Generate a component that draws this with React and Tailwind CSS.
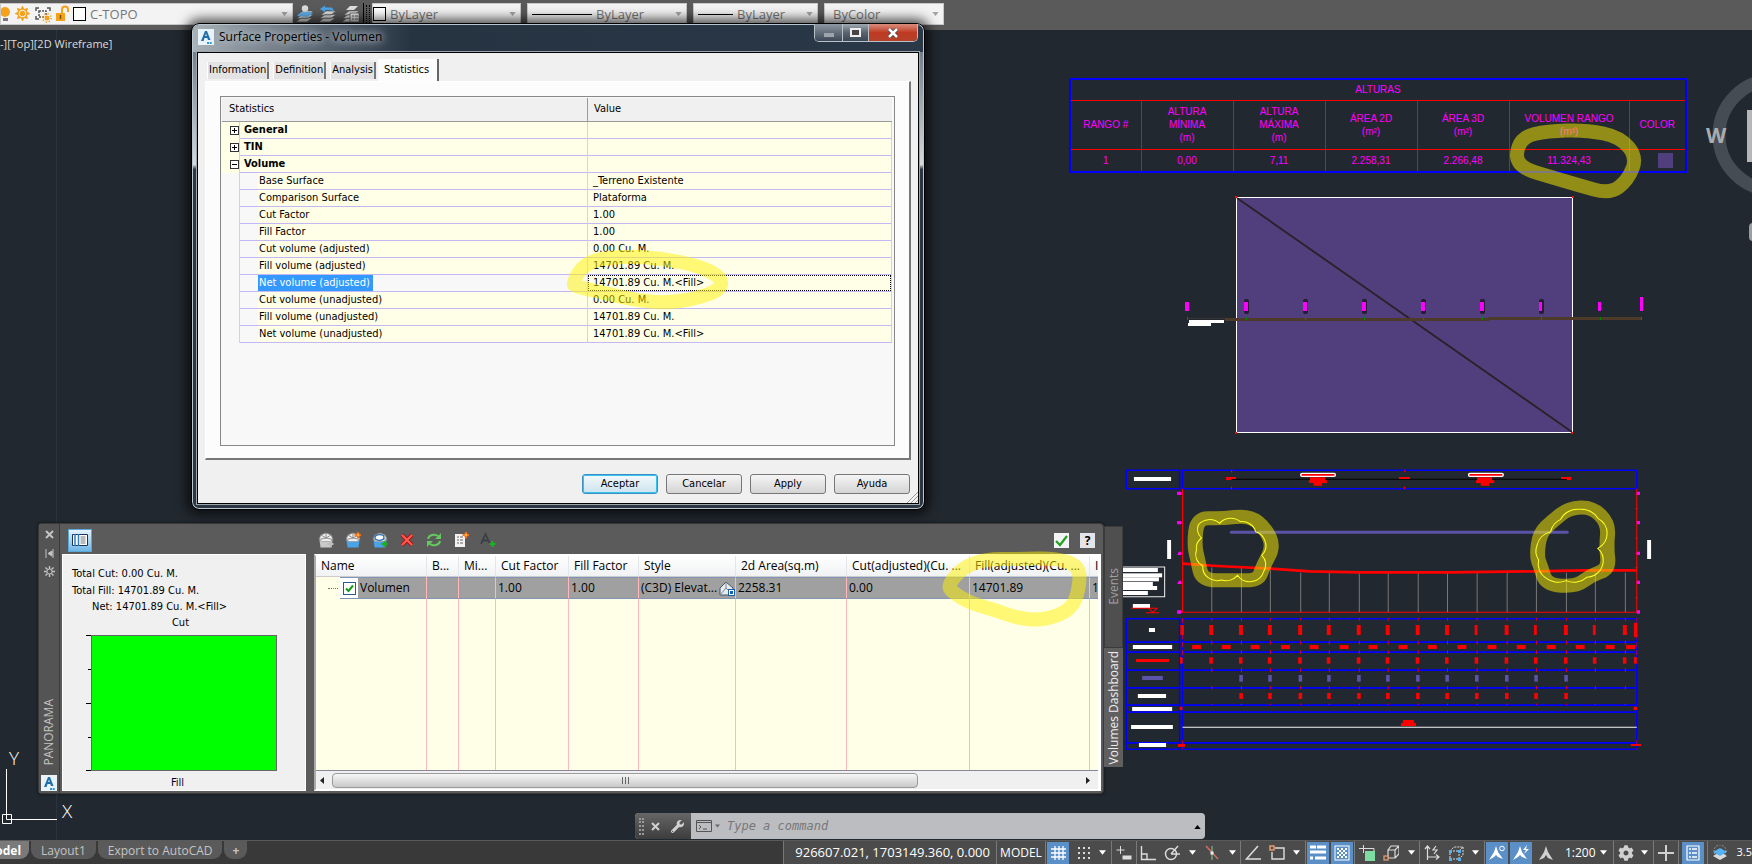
import { FaCog, FaWrench, FaSun } from "react-icons/fa";

const statRows = [
  { label: "General", group: true, open: false },
  { label: "TIN", group: true, open: false },
  { label: "Volume", group: true, open: true },
  { label: "Base Surface", value: "_Terreno Existente" },
  { label: "Comparison Surface", value: "Plataforma" },
  { label: "Cut Factor", value: "1.00" },
  { label: "Fill Factor", value: "1.00" },
  { label: "Cut volume (adjusted)", value: "0.00 Cu. M." },
  { label: "Fill volume (adjusted)", value: "14701.89 Cu. M." },
  { label: "Net volume (adjusted)", value: "14701.89 Cu. M.<Fill>", selected: true },
  { label: "Cut volume (unadjusted)", value: "0.00 Cu. M." },
  { label: "Fill volume (unadjusted)", value: "14701.89 Cu. M." },
  { label: "Net volume (unadjusted)", value: "14701.89 Cu. M.<Fill>" },
];

const stations = [285, 368, 449, 534, 614, 698, 779, 863, 945, 1028, 1112, 1194, 1278, 1359, 1443];

// closed curve that runs through the middle of each pair of points
function smooth(points) {
  const mid = (a, b) => [(a[0] + b[0]) / 2, (a[1] + b[1]) / 2];
  const start = mid(points[points.length - 1], points[0]);
  const parts = points.map((p, i) => {
    const m = mid(p, points[(i + 1) % points.length]);
    return `Q${p[0]} ${p[1]} ${m[0]} ${m[1]}`;
  });
  return `M${start[0]} ${start[1]}${parts.join("")}Z`;
}

function cloud(points, r) {
  const rest = points.slice(1).concat([points[0]]);
  return `M${points[0].join(" ")}` + rest.map((p) => `A${r} ${r} 0 0 1 ${p.join(" ")}`).join("");
}

function Arrow({ className }) {
  return (
    <svg viewBox="0 0 8 5" className={className}>
      <path d="M0 0h8L4 5z" fill="currentColor" />
    </svg>
  );
}

function AppLogo({ className }) {
  return (
    <svg viewBox="0 0 16 16" className={className}>
      <rect width="16" height="16" fill="#e9f3fa" />
      <path d="M3 12 7 2h2l3.500 9h-2.500l-.7-2H6.500l-.9 3zM7.200 7h1.600L8 4.500z" fill="#1f6fa8" fillRule="evenodd" />
      <path d="M9 14h5" stroke="#2f9bd6" strokeWidth="2" strokeDasharray="2 .7" />
    </svg>
  );
}

/* ---------- top toolbar ---------- */

function Combo({ label, value, className, children }) {
  return (
    <div className={`flex h-[22px] items-center border border-[#c8c8c8] bg-[#f3f3f3] ${className}`}>
      {children}
      <select aria-label={label} className="min-w-0 flex-1 appearance-none bg-transparent text-[13px] leading-5 text-[#777] outline-none">
        <option>{value}</option>
      </select>
      <Arrow className="mr-1 h-1 w-[7px] text-[#a5a5a5]" />
    </div>
  );
}

function Swatch() {
  return <span className="mr-1 h-[14px] w-[13px] shrink-0 border border-black bg-white" />;
}

function LayerIcon({ kind }) {
  return (
    <svg viewBox="0 0 18 18" className="h-[18px] w-[18px]">
      <path d="m0 17 5-4h11l-5 4zM1 13.500l5-4h11l-5 4zM2 10l5-4h10l-5 4z" fill="#dedede" stroke="#5b5b5b" strokeWidth=".6" />
      {kind === "current" && (
        <g>
          <path d="M1 11c3-5 11-5 16-3l-5 4z" fill="#62b1ec" />
          <circle cx="9" cy="3.500" r="3.200" fill="#dcdcdc" />
        </g>
      )}
      {kind === "previous" && <path d="M1 4 6 .5v2h5c3 0 4 2 3.500 5C13 5 11 5 6 5v2.500z" fill="#4aa3e6" />}
      {kind === "states" && (
        <g>
          <path d="m4 5 4-4h8l-4 4z" fill="#dedede" />
          <rect x="8" y="8" width="9" height="9" fill="#e4e4e4" stroke="#4d4d4d" strokeWidth=".7" />
          <path d="M10 11h2m1 0h3m-6 3h2m1 0h3" stroke="#555" />
        </g>
      )}
    </svg>
  );
}

function Toolbar() {
  return (
    <header className="flex h-[30px] shrink-0 items-start bg-[#5a5a5a] pt-[3px]">
      <Combo label="Layer" value="C-TOPO" className="w-[293px]">
        <svg viewBox="0 0 72 18" className="h-[18px] w-[72px] shrink-0">
          <circle cx="4" cy="7" r="5" fill="#f5a21b" />
          <rect x="2" y="13" width="5" height="3" fill="#777" />
          <g fill="none" stroke="#555" strokeWidth="1.500">
            <path d="M35 6V3h3m8 0h3v3M35 11v3h3" />
            <path d="M38 6h7v6h-7z" strokeDasharray="2 1" />
          </g>
          <circle cx="46" cy="13" r="2.500" fill="#f5a21b" />
          <circle cx="46" cy="13" r="4.200" fill="none" stroke="#f5a21b" strokeWidth="1.500" strokeDasharray="1.300 2" />
          <path d="M55 8h9v8h-9z" fill="#f5a21b" />
          <path d="M61 8V4.500a3 3 0 0 1 6 0V7" fill="none" stroke="#f5a21b" strokeWidth="2" />
          <path d="M59.500 10v4" stroke="#7a4d00" strokeWidth="1.500" />
          <g>
            <FaSun x="14" y="1" width="15" height="15" size={15} color="#f5a21b" />
          </g>
        </svg>
        <Swatch />
      </Combo>
      <div className="mx-[3px] flex h-[22px] items-center gap-[5px]">
        <LayerIcon kind="current" />
        <LayerIcon kind="previous" />
        <LayerIcon kind="states" />
      </div>
      <div className="flex h-[22px] items-center border-l border-black">
        <span className="mx-[2px] h-[18px] w-1 border-x border-dotted border-black" />
      </div>
      <div className="flex gap-[6px]">
        <Combo label="Object color" value="ByLayer" className="w-[149px]">
          <Swatch />
        </Combo>
        <Combo label="Linetype" value="ByLayer" className="w-[160px]">
          <span className="ml-1 mr-1 h-px w-[60px] bg-black" />
        </Combo>
        <Combo label="Lineweight" value="ByLayer" className="w-[125px]">
          <span className="ml-1 mr-1 h-px w-[35px] bg-black" />
        </Combo>
        <Combo label="Plot style" value="ByColor" className="w-[120px] pl-2" />
      </div>
    </header>
  );
}

/* ---------- drawing area ---------- */

function HeightsTable() {
  const head = "border border-[#f00] font-normal leading-[13px]";
  return (
    <table className="absolute left-[1069px] top-[48px] w-[618px] table-fixed border-collapse border-2 border-[#00f] text-center font-['Liberation_Sans',sans-serif] text-[10px] text-[#f0f]">
      <colgroup>
        <col className="w-[71px]" />
        <col className="w-[92px]" />
        <col className="w-[92px]" />
        <col className="w-[92px]" />
        <col className="w-[92px]" />
        <col className="w-[120px]" />
        <col />
      </colgroup>
      <thead>
        <tr className="h-[21px]">
          <th colSpan={7} className="border-b border-[#f00] font-normal">ALTURAS</th>
        </tr>
        <tr className="h-[49px]">
          <th className={head}>RANGO #</th>
          <th className={head}>ALTURA<br />MÍNIMA<br />(m)</th>
          <th className={head}>ALTURA<br />MÁXIMA<br />(m)</th>
          <th className={head}>ÁREA 2D<br />(m²)</th>
          <th className={head}>ÁREA 3D<br />(m²)</th>
          <th className={head}>VOLUMEN RANGO<br />(m³)</th>
          <th className={head}>COLOR</th>
        </tr>
      </thead>
      <tbody>
        <tr className="h-[23px]">
          {["1", "0,00", "7,11", "2.258,31", "2.266,48", "11.324,43"].map((v) => (
            <td key={v} className="border-x border-[#f00]">{v}</td>
          ))}
          <td>
            <span className="ml-7 block h-[15px] w-[15px] bg-[#503e7d]" />
          </td>
        </tr>
      </tbody>
    </table>
  );
}

function PlanView() {
  const labels = [1187, 1246, 1305, 1364, 1423, 1482, 1541, 1600];
  return (
    <svg viewBox="1180 190 470 250" className="absolute left-[1180px] top-[160px] h-[250px] w-[470px]">
      <rect x="1236.500" y="197.500" width="336" height="235" fill="#503e7d" stroke="#fff" />
      <path d="M1237 198 1572 432" stroke="#2a2128" strokeWidth="1.800" />
      <path d="M1235 196h2v2h-2zM1572 196h2v2h-2zM1235 432h2v2h-2zM1571 432h2v2h-2z" fill="#f00" />
      <path d="M1187 318.500h38" stroke="#3a3330" />
      <path d="M1225 319.500H1488L1490 318.500H1642" fill="none" stroke="#4d3a28" strokeWidth="3" />
      {labels.map((x, i) => (
        <g key={x}>
          {i > 0 && i < 7 && <rect x={x - 2} y="299" width="5" height="15" rx="2" fill="#241c33" />}
          <rect x={x - 2} y="302" width={i > 5 ? 3 : 4} height="9" fill="#f0f" />
          <path d={`M${x + 0.5} 317v3`} stroke="#080" />
        </g>
      ))}
      <rect x="1640" y="297" width="3" height="14" fill="#f0f" />
      <path d="M1641.500 317v3" stroke="#080" />
      <path d="M1189 320h35v3h-13v3h-23v-3h1z" fill="#fff" />
    </svg>
  );
}

function ProfileView() {
  const vs = { vectorEffect: "non-scaling-stroke" };
  const rows = [506, 577, 607, 661, 713, 766, 787, 878, 898];
  const captions = [
    [67, 81, 104, "#fff"], [109, 534, 17, "#fff"], [64, 585, 110, "#fff"], [73, 627, 92, "#f00", 9], [90, 678, 58, "#5a53a8"],
    [78, 732, 79, "#fff"], [62, 771, 112, "#fff"], [59, 825, 117, "#fff"], [81, 879, 76, "#fff"],
  ];
  const legend = [[354, 98], [370, 110], [382, 101], [396, 84], [408, 96], [423, 70]];
  const cloudA = [[247, 225], [307, 220], [365, 215], [408, 245], [433, 270], [425, 316], [430, 365], [357, 376], [312, 390], [260, 348], [242, 300], [256, 264]];
  const cloudB = [[1234, 245], [1262, 208], [1315, 178], [1366, 205], [1366, 295], [1358, 375], [1335, 382], [1277, 392], [1222, 385], [1200, 330], [1196, 285]];
  const bandA = [[236, 285], [244, 203], [310, 206], [390, 196], [435, 235], [458, 290], [428, 350], [415, 392], [340, 390], [258, 392], [246, 330]];
  const bandB = [[1195, 320], [1203, 250], [1240, 212], [1285, 174], [1350, 171], [1396, 220], [1390, 290], [1397, 357], [1345, 377], [1305, 410], [1222, 404], [1206, 350]];
  return (
    <svg viewBox="0 0 1568 930" preserveAspectRatio="none" className="absolute left-[1110px] top-[420px] h-[310px] w-[560px]">
      <g fill="none" stroke="#00f" strokeWidth="1.500">
        <path d="M46 61H195V116H46zM203 61H1475V116H203z" style={vs} />
        {rows.slice(1).map((y, i) => (
          <path key={y} d={`M46 ${rows[i]}H195V${y}H46zM203 ${rows[i]}H1475V${y}H203z`} style={vs} />
        ))}
      </g>
      {captions.map(([x, y, w, fill, h = 12]) => (
        <rect key={y} x={x} y={y} width={w} height={h} fill={fill} />
      ))}
      <path d="M340 88H1280" stroke="#000" strokeWidth="3" />
      <g fill="#f00">
        <path d="M325 81h28v6h-14v3h-14zM809 81h31v6h-31zM1263 81h28v9h-12v-3h-16zM339 60h3v7h-3zM339 110h3v7h-3zM824 60h3v7h-3zM823 110h3v7h-3z" />
        <path d="M560 82h42v9h6v8h-14v8h-24v-8h-13v-8h3zM1028 82h42v9h6v8h-14v8h-24v-8h-13v-8h3z" />
      </g>
      <rect x="534" y="70" width="97" height="9" rx="4" fill="#f00" stroke="#fff" strokeWidth="4" />
      <rect x="1004" y="70" width="97" height="9" rx="4" fill="#f00" stroke="#fff" strokeWidth="4" />
      <path d="M203 116V487M1475 116V487M190 487H1475" stroke="#f00" strokeWidth="3" fill="none" />
      <path d="M1470 132h9M1470 176h9M1470 265h9M1470 310h9M1470 353h9M1470 443h9M200 132h7M200 220h7M200 310h7M200 398h7" stroke="#f00" strokeWidth="2" />
      {[130, 218, 310, 397, 486].map((y, i) => (
        <path key={y} d={`M${i === 2 || i === 3 ? 193 : 188} ${y - 5}H199V${y + 5}H188zM1475 ${y - 5}h9v10h-9z`} fill="#f0f" />
      ))}
      <path d="M160 270h11v57h-11zM1504 270h11v57h-11z" fill="#fff" />

      {/* legend box, partly under the side tabs */}
      <path d="M0 351H153V440H0" fill="none" stroke="#e8e8e8" strokeWidth="3" />
      {legend.map(([y, w]) => (
        <rect key={y} x="36" y={y} width={w} height="12" fill="#fff" />
      ))}
      <path d="M64 462h48v12h-48z" fill="#fff" />
      <path d="M59 475H132L120 487 108 475M101 488h36" fill="none" stroke="#f00" strokeWidth="3" />

      {stations.map((x) => (
        <path key={x} d={`M${x} ${x < 500 ? 352 : 368}V486`} stroke="#858585" strokeWidth="2.500" />
      ))}
      <path d="M340 247H1280" stroke="#5a53a8" strokeWidth="9" strokeLinecap="round" />
      <path d="M203 341 300 348 450 356 560 364 700 367H950L1190 364 1330 361H1475" fill="none" stroke="#f00" strokeWidth="8" />

      {stations.map((x, i) => (
        <g key={x}>
          <path d={`M${x} 504V512M${x} 572V584M${x} 601V612M${x} 654V666M${x} 708V718M${x} 761V765`} stroke="#f00" strokeWidth="2.500" />
          <rect x={x - 7} y="525" width={i % 2 && i > 8 ? 8 : 11} height="30" fill="#f00" />
          <rect x={x - 7} y="622" width="10" height="19" fill="#f00" />
          {i > 0 && i < 13 && <rect x={x - 6} y="675" width="10" height="20" fill="#5a53a8" />}
          {i > 0 && i < 13 && <rect x={x - 6} y="729" width="10" height="18" fill="#f00" />}
          <rect x={x - 55} y="585" width="25" height="12" fill="#f00" />
        </g>
      ))}
      <path d="M1445 585h25v12h-25zM197 525h10v30h-10zM1467 519h10v42h-10zM196 621h6v20h-6zM1467 621h8v20h-8zM195 770h8v10h-8zM1466 770h10v10h-10zM190 882h20v9h-20zM1458 882h29v6h-29z" fill="#f00" />
      <path d="M203 504V640M1475 504V640M203 870V898M1475 870V898" stroke="#f00" strokeWidth="2" strokeDasharray="16 8" />
      <path d="M203 832H1475" stroke="#f4f4f4" strokeWidth="3" />
      <path d="M820 810h31v9h6v9h-42v-9h5z" fill="#f00" />

      <g fill="none">
        <path d={smooth(bandA)} stroke="#fff200" strokeOpacity=".5" strokeWidth="42" />
        <path d={smooth(bandB)} stroke="#fff200" strokeOpacity=".5" strokeWidth="42" />
        <path d={cloud(cloudA, 40)} stroke="#ffff20" strokeWidth="3" />
        <path d={cloud(cloudB, 52)} stroke="#ffff20" strokeWidth="3" />
      </g>
    </svg>
  );
}

function Canvas() {
  return (
    <main className="relative min-h-0 flex-1 overflow-hidden bg-[#22282f]">
      <div className="ml-14 h-full border-l border-[#2b3340]" />
      <p className="absolute left-0 top-[5px] text-[11px] leading-[18px] text-[#dcdcdc]">-][Top][2D Wireframe]</p>
      <HeightsTable />
      <PlanView />
      <ProfileView />
      {/* view cube */}
      <div className="absolute right-0 top-9 h-[180px] w-12 overflow-hidden">
        <svg viewBox="1704 66 48 180" className="h-[180px] w-12">
          <circle cx="1774" cy="135" r="55" fill="none" stroke="#464c54" strokeWidth="13" />
          <text x="1706" y="143" fontSize="21" fontWeight="700" fill="#a9adb1">W</text>
          <rect x="1747" y="110" width="12" height="52" fill="#b4b6b8" />
          <rect x="1749" y="223" width="20" height="18" rx="4" fill="#9a9da1" />
        </svg>
      </div>
      {/* ucs icon */}
      <svg viewBox="0 745 80 85" className="absolute bottom-[10px] left-0 h-[85px] w-20 font-['Open_Sans',sans-serif]">
        <path d="M6.500 769V819.500H57M2.500 814.500h9v9h-9z" fill="none" stroke="#fff" />
        <text x="9" y="765" fontSize="19" fontWeight="300" fill="#fff">Y</text>
        <text x="62" y="818" fontSize="19" fontWeight="300" fill="#fff">X</text>
      </svg>
    </main>
  );
}

/* ---------- surface properties ---------- */

function StatsTable() {
  return (
    <table className="w-full table-fixed border-separate border-spacing-0">
      <colgroup>
        <col className="w-[18px]" />
        <col className="w-[347px]" />
        <col />
      </colgroup>
      <thead>
        <tr className="h-6 bg-[#f0f0f0] text-left">
          <th colSpan={2} className="border-b border-[#999] pl-[7px] font-normal">Statistics</th>
          <th className="border-b border-l border-[#999] pl-[6px] font-normal">Value</th>
        </tr>
      </thead>
      <tbody>
        {statRows.map((row) => (
          <tr key={row.label} className="h-[17px] leading-4">
            <td className={`border-r border-[#ffc0c8] p-0 align-top ${row.group ? "bg-[#ffffe8]" : ""}`}>
              {row.group && (
                <button aria-label={row.label} className="float-right mt-1 flex h-[9px] w-[9px] items-center justify-center border border-[#333] bg-white">
                  <svg viewBox="0 0 5 5" className="h-[5px] w-[5px]">
                    <path d={row.open ? "M0 2.500h5" : "M0 2.500h5M2.500 0v5"} stroke="#000" />
                  </svg>
                </button>
              )}
            </td>
            <td className={`border-b border-[#c4b8f4] p-0 ${row.group ? "bg-[#ffffe8] pl-1 font-bold" : ""}`}>
              {row.group ? (
                row.label
              ) : (
                <div className={`ml-[18px] ${row.selected ? "" : "bg-[#ffffe8]"}`}>
                  <span className={`block h-4 w-fit px-px ${row.selected ? "bg-[#3399ff] pr-[3px] text-white" : ""}`}>{row.label}</span>
                </div>
              )}
            </td>
            <td className="border-b border-l border-r border-b-[#c4b8f4] border-l-[#ffc0c8] border-r-[#ffc0c8] bg-[#ffffe8] p-0">
              <div className={`h-4 border border-dotted pl-1 leading-[14px] ${row.selected ? "border-black" : "border-transparent"}`}>{row.value}</div>
            </td>
          </tr>
        ))}
      </tbody>
    </table>
  );
}

function SurfaceDialog() {
  const tab = "mr-1 h-[17px] border-l border-r-2 border-l-white border-r-[#777] bg-[#e3e3e3] px-px";
  const button = "h-5 w-[76px] rounded-[3px] border bg-linear-to-b from-[#f5f5f5] to-[#d4d4d4]";
  return (
    <section className="absolute left-[191px] top-[23px] flex h-[487px] w-[734px] flex-col rounded-lg border border-black bg-linear-to-b from-[#5c6b78] from-0% via-[#d5dadd] via-29% to-[#2b3642] to-30% p-[5px] pt-0 font-['DejaVu_Sans_Condensed','DejaVu_Sans',sans-serif] text-[11px] text-black shadow-[0_0_12px_4px_rgba(0,0,0,.7),inset_0_0_0_1px_#b9c6cf]">
      <div className="mx-[-4px] mt-px flex h-[27px] shrink-0 items-start rounded-t-[6px] bg-linear-to-r from-[#a9b2b8] via-[#263341] via-30% to-[#2a3847] pl-[5px]">
        <AppLogo className="mt-1 h-4 w-4" />
        <h2 className="ml-[5px] mt-1 font-['Open_Sans',sans-serif] text-xs leading-4 [text-shadow:0_0_6px_#b4bec6,0_0_10px_#b4bec6,0_0_12px_#b4bec6]">Surface Properties - Volumen</h2>
        <div className="-mt-px ml-auto mr-[5px] flex h-[18px] overflow-hidden rounded-b-[5px] border border-t-0 border-[#b8c0c8]">
          <button aria-label="Minimize" className="flex w-[28px] items-center justify-center border-r border-[#b8c0c8] bg-linear-to-b from-[#8e98a3] to-[#3c4857]">
            <span className="mt-1 h-1 w-[10px] bg-[#9ba3ab]" />
          </button>
          <button aria-label="Maximize" className="flex w-[26px] items-center justify-center border-r border-[#b8c0c8] bg-linear-to-b from-[#a0a9b2] via-[#59646f] to-[#3c4857]">
            <span className="h-[9px] w-[11px] border-2 border-[#eee] bg-[#444]" />
          </button>
          <button aria-label="Close" className="flex w-[48px] items-center justify-center bg-linear-to-b from-[#d98c7d] via-[#bf3a22] to-[#b5402a]">
            <svg viewBox="0 0 12 10" className="h-[10px] w-3">
              <path d="m2 1 8 8M10 1 2 9" stroke="#444" strokeWidth="4" />
              <path d="m2 1 8 8M10 1 2 9" stroke="#fff" strokeWidth="2.500" />
            </svg>
          </button>
        </div>
      </div>

      <div className="relative flex min-h-0 flex-1 flex-col border border-black bg-[#f0f0f0] px-[7px] pt-[6px] shadow-[0_0_0_1px_#9aa5ae]">
        <div role="tablist" className="z-10 flex h-[22px] items-end pb-[2px] pl-[2px]">
          <button role="tab" className={tab}>Information</button>
          <button role="tab" className={tab}>Definition</button>
          <button role="tab" className={tab}>Analysis</button>
          <button role="tab" aria-selected="true" className="-mb-[2px] -ml-[2px] h-[22px] border-r-2 border-[#666] bg-[#fcfcfc] pl-[6px] pr-2">Statistics</button>
        </div>
        <div className="mb-[43px] flex min-h-0 flex-1 border-b-2 border-l border-r-2 border-t border-b-[#777] border-l-white border-r-[#777] border-t-white bg-[#fcfcfc] p-[14px] pb-3">
          <div className="flex-1 border border-[#888] bg-[#f8f8f8] p-px pr-[2px]">
            <StatsTable />
          </div>
        </div>
        <div className="absolute bottom-[9px] right-2 flex gap-2">
          <button className="h-5 w-[76px] rounded-[3px] border border-[#3c8fbf] bg-linear-to-b from-[#f3f9fc] to-[#cde3ee] shadow-[inset_0_0_0_1px_#35c4f0]">Aceptar</button>
          <button className={`${button} border-[#777]`}>Cancelar</button>
          <button className={`${button} border-[#777]`}>Apply</button>
          <button className={`${button} border-[#777]`}>Ayuda</button>
        </div>
        <svg viewBox="0 0 12 12" className="absolute bottom-0 right-0 h-3 w-3">
          <path d="M1 12 12 1M5 12l7-7M9 12l3-3" stroke="#999" />
        </svg>
      </div>
    </section>
  );
}

/* ---------- panorama ---------- */

function SurfaceGlyph({ base, children }) {
  return (
    <svg viewBox="0 0 16 16" className="h-4 w-4">
      <path d="M1.500 8h13l-1 7.500h-11z" fill={base} />
      <path d="M1 7.500 3 3l5-2 5 2 2 4.500-3 2H4z" fill="#eee" stroke="#999" strokeWidth=".7" />
      <path d="M3 3l5 3 5-3M8 1v5M1 7.500 8 6l7 1.500" fill="none" stroke="#777" strokeWidth=".8" />
      {children}
    </svg>
  );
}

function PanoramaTools() {
  const plus = (color) => <path d="M12.500 9v6M9.500 12h6" stroke={color} strokeWidth="2.200" />;
  const spark = <path d="m13 0 1 2 2 1-2 1-1 2-1-2-2-1 2-1z" fill="#ffd24a" stroke="#f26a1b" strokeWidth="1.200" />;
  return (
    <div className="flex items-center gap-[11px]">
      <button aria-label="Create new volume surface"><SurfaceGlyph base="#c9c9c9">{plus("#bdbdbd")}</SurfaceGlyph></button>
      <button aria-label="Create volume surface"><SurfaceGlyph base="#4aa3e6">{spark}</SurfaceGlyph></button>
      <button aria-label="Add volume surface">
        <SurfaceGlyph base="#4aa3e6">
          <ellipse cx="7.500" cy="5.500" rx="4.500" ry="2.800" fill="#fff" stroke="#2a6fb0" strokeWidth="1.300" />
          {plus("#17b51b")}
        </SurfaceGlyph>
      </button>
      <button aria-label="Remove">
        <svg viewBox="0 0 16 16" className="h-4 w-4"><path d="m3 3 10 10M13 3 3 13" stroke="#a31313" strokeWidth="4" /><path d="m3 3 10 10M13 3 3 13" stroke="#ff5a4f" strokeWidth="2.200" /></svg>
      </button>
      <button aria-label="Recompute">
        <svg viewBox="0 0 16 16" className="h-4 w-4">
          <path d="M2 7a6 5 0 0 1 10-3M14 9a6 5 0 0 1-10 3" fill="none" stroke="#63c95f" strokeWidth="2" />
          <path d="M15 1v6H9zM1 15V9h6z" fill="#63c95f" />
        </svg>
      </button>
      <button aria-label="Report">
        <svg viewBox="0 0 16 16" className="h-4 w-4">
          <path d="M2 2h10v13H2z" fill="#f2f2f2" />
          <path d="M4 5h2m1 0h3M4 8h2m1 0h3M4 11h2m1 0h3" stroke="#666" strokeWidth="1.200" />
          {spark}
        </svg>
      </button>
      <button aria-label="Insert text">
        <svg viewBox="0 0 16 16" className="h-4 w-4">
          <path d="M1 12 5.500 2 10 12M3 8.500h5" fill="none" stroke="#3a3f46" strokeWidth="1.800" />
          {plus("#17b51b")}
        </svg>
      </button>
    </div>
  );
}

function VolumeList() {
  const cols = ["w-[111px]", "w-8", "w-[37px]", "w-[73px]", "w-[70px]", "w-[97px]", "w-[111px]", "w-[123px]", "w-[120px]", "w-[10px]"];
  const heads = ["Name", "B...", "Mi...", "Cut Factor", "Fill Factor", "Style", "2d Area(sq.m)", "Cut(adjusted)(Cu. ...", "Fill(adjusted)(Cu. ...", "I"];
  const cell = "overflow-hidden whitespace-nowrap border-b border-t border-r border-b-[#8095b5] border-t-[#8095b5] border-r-[#ffb8bc] bg-[#a0a0a0] p-0 pl-[2px]";
  return (
    <div className="flex min-w-0 flex-1 flex-col border-2 border-r-[3px] border-white border-l-[#aaa] bg-[#f0f0f0]">
      <div className="min-h-0 flex-1 overflow-hidden border-b border-[#889] bg-[#ffffe8]">
        <table className="h-full w-full table-fixed border-separate border-spacing-0 text-xs">
          <colgroup>
            {cols.map((c, i) => <col key={i} className={c} />)}
          </colgroup>
          <thead>
            <tr className="h-[21px]">
              {heads.map((h) => (
                <th key={h} className="overflow-hidden whitespace-nowrap border-b border-r border-b-[#ccc] border-r-[#e3e6ea] bg-linear-to-b from-white to-[#f1f2f4] p-0 pl-[5px] text-left font-normal">{h}</th>
              ))}
            </tr>
          </thead>
          <tbody>
            <tr className="h-[22px]">
              <td className="border-r border-[#ffb8bc] p-0">
                <label className="flex h-[22px] items-center">
                  <span className="ml-3 mr-[2px] w-[10px] border-t border-dotted border-[#777]" />
                  <span className="relative flex h-[22px] w-[18px] items-center justify-center border-y border-[#8095b5] bg-white">
                    <input type="checkbox" defaultChecked className="h-[13px] w-[13px] appearance-none border border-[#2b5a85] bg-white" />
                    <svg viewBox="0 0 9 9" className="pointer-events-none absolute h-[9px] w-[9px]">
                      <path d="M1 4.500 3.500 7 8 1.500" fill="none" stroke="#169a1b" strokeWidth="2" />
                    </svg>
                  </span>
                  <span className="h-[22px] flex-1 border-y border-[#8095b5] bg-[#a0a0a0] pl-[2px] leading-5">Volumen</span>
                </label>
              </td>
              <td className={cell} />
              <td className={cell} />
              <td className={cell}>1.00</td>
              <td className={cell}>1.00</td>
              <td className={cell}>
                <div className="flex items-center justify-between">
                  (C3D) Elevat...
                  <svg viewBox="0 0 16 16" className="h-4 w-4 shrink-0">
                    <path d="M1 15V8l6-6 7 6v7z" fill="#e8ebee" stroke="#456" />
                    <path d="M1 15 7 8l7 7M7 2v6" fill="none" stroke="#789" />
                    <rect x="9.500" y="9.500" width="6" height="6" fill="#fff" stroke="#1b5fae" />
                    <rect x="11" y="11" width="3" height="3" fill="#1b5fae" />
                  </svg>
                </div>
              </td>
              <td className={cell}>2258.31</td>
              <td className={cell}>0.00</td>
              <td className={cell}>14701.89</td>
              <td className={cell}>1</td>
            </tr>
            <tr>
              {cols.map((c, i) => <td key={i} className="border-r border-[#ffb8bc] p-0" />)}
            </tr>
          </tbody>
        </table>
      </div>
      <div className="flex h-[18px] shrink-0 items-center pr-2">
        <button aria-label="Scroll left" className="w-4 pl-1">
          <svg viewBox="0 0 4 7" className="h-[7px] w-1"><path d="M4 0v7L0 3.500z" fill="#222" /></svg>
        </button>
        <div className="flex h-[15px] w-[586px] items-center justify-center gap-[2px] rounded-sm border border-[#9a9a9a] bg-linear-to-b from-[#f6f6f6] to-[#c9c9cb]">
          {[0, 1, 2].map((i) => <span key={i} className="h-[7px] w-px bg-[#666]" />)}
        </div>
        <button aria-label="Scroll right" className="ml-auto flex">
          <svg viewBox="0 0 4 7" className="h-[7px] w-1"><path d="M0 0v7l4-3.500z" fill="#222" /></svg>
        </button>
      </div>
    </div>
  );
}

function VolumeChart() {
  return (
    <div className="w-[244px] shrink-0 border border-white bg-[#f0f0f0] pl-[9px] pt-[10px] font-['DejaVu_Sans_Condensed','DejaVu_Sans',sans-serif] text-[11px] leading-[17px]">
      <p>Total Cut: 0.00 Cu. M.</p>
      <p>Total Fill: 14701.89 Cu. M.</p>
      <p className="pl-5 leading-4">Net: 14701.89 Cu. M.&lt;Fill&gt;</p>
      <p className="w-[217px] text-center leading-4">Cut</p>
      <div className="mt-1 flex">
        <svg viewBox="0 0 5 136" className="ml-[14px] h-[136px] w-[5px]">
          <path d="M0 .5h5M2 34.500h3M0 68.500h5M2 102.500h3M0 135.500h5" stroke="#000" />
        </svg>
        <div className="h-[136px] w-[186px] border border-[#666] bg-[#0f0]" />
      </div>
      <p className="mt-[3px] w-[211px] text-center text-[#003]">Fill</p>
    </div>
  );
}

function Panorama() {
  const vertical = "rotate-180 [writing-mode:vertical-rl]";
  return (
    <section className="absolute left-[38px] top-[523px] flex h-[271px] w-[1085px] text-black">
      <div className="flex w-[1066px] rounded-sm border border-[#3a3a3a] bg-[#5b5b5b] shadow-[0_0_3px_#111]">
        <div className="flex w-[21px] shrink-0 flex-col items-center border-r border-[#3a3a3a] bg-[#545454] pt-[6px] text-[#c4c4c4]">
          <button aria-label="Close"><svg viewBox="0 0 9 9" className="h-[9px] w-[9px]"><path d="m1 1 7 7M8 1 1 8" stroke="currentColor" strokeWidth="2" /></svg></button>
          <button aria-label="Auto-hide"><svg viewBox="0 0 9 9" className="mt-[10px] h-[9px] w-[9px]"><path d="M1 0v9M8 0v9M7 2v5L3 4.500z" stroke="currentColor" fill="currentColor" /></svg></button>
          <button aria-label="Properties"><svg viewBox="0 0 11 11" className="mt-2 h-[11px] w-[11px]"><circle cx="5.500" cy="5.500" r="2.500" fill="none" stroke="currentColor" /><path d="M5.500 0v3M5.500 8v3M0 5.500h3M8 5.500h3M1.500 1.500l2 2M7.500 7.500l2 2M9.500 1.500l-2 2M3.500 7.500l-2 2" stroke="currentColor" strokeWidth="1.400" /></svg></button>
          <span className={`mb-[9px] mt-auto text-xs leading-4 ${vertical}`}>PANORAMA</span>
          <AppLogo className="mb-[2px] h-4 w-4" />
        </div>
        <div className="flex min-w-0 flex-1 flex-col p-[2px]">
          <div className="flex h-[28px] shrink-0 items-center">
            <button aria-label="Show chart" className="ml-[6px] flex h-[23px] w-6 items-center justify-center border border-[#5aa7dc] bg-linear-to-b from-[#e6f4fc] to-[#6db6e6]">
              <svg viewBox="0 0 16 14" className="h-[14px] w-4">
                <path d="M.5 1.500h15v11H.5z" fill="#fff" stroke="#235" />
                <path d="M3 1v12M6.500 1v12" stroke="#2f7fc0" strokeWidth="1.500" />
                <path d="M8.500 4h5M8.500 6h5M8.500 8h5M8.500 10h5" stroke="#777" />
              </svg>
            </button>
            <div className="ml-[226px]"><PanoramaTools /></div>
            <div className="ml-auto mr-[6px] flex gap-[11px]">
              <button aria-label="Accept" className="h-[15px] w-[15px] bg-[#f4f4f6]">
                <svg viewBox="0 0 15 15"><path d="m2 8 4 4 7-9" fill="none" stroke="#25a022" strokeWidth="2.200" /></svg>
              </button>
              <button aria-label="Help" className="h-[15px] w-[15px] bg-[#e4e4ea] text-xs font-bold leading-[15px]">?</button>
            </div>
          </div>
          <div className="flex min-h-0 flex-1 gap-2">
            <VolumeChart />
            <VolumeList />
          </div>
        </div>
      </div>
      <div className="mb-[27px] mt-[3px] flex w-[19px] flex-col text-xs">
        <button className="flex flex-1 items-center justify-center border border-[#3b3b3b] bg-[#4f4f4f] text-[#a0a0a0]"><span className={vertical}>Events</span></button>
        <button className="flex flex-1 items-center justify-center bg-[#5f5f5f] text-[#eee]"><span className={vertical}>Volumes Dashboard</span></button>
      </div>
    </section>
  );
}

function CommandLine() {
  return (
    <form className="absolute bottom-[25px] left-[635px] flex h-[26px] w-[570px] rounded-sm bg-[#bcbdc0]">
      <div className="flex w-[56px] items-center rounded-l-sm bg-linear-to-b from-[#666] to-[#3d3d3d] pl-1 text-[#d0d0d0]">
        <span className="h-[17px] w-[5px] border-x-2 border-dotted border-[#999]" />
        <button type="button" aria-label="Close" className="ml-[7px]"><svg viewBox="0 0 9 9" className="h-[9px] w-[9px]"><path d="m1 1 7 7M8 1 1 8" stroke="currentColor" strokeWidth="2" /></svg></button>
        <button type="button" aria-label="Customize" className="ml-[11px]"><FaWrench size={13} /></button>
      </div>
      <svg viewBox="0 0 16 12" className="ml-[5px] mt-[7px] h-3 w-4">
        <path d="M.5.5h15v11H.5zM.5 2.500h15" fill="none" stroke="#555" />
        <path d="m3 5 2 2-2 2M7 9h4" fill="none" stroke="#555" />
      </svg>
      <Arrow className="ml-[3px] mt-[11px] h-1 w-[5px] text-[#666]" />
      <input aria-label="Command" placeholder="Type a command" className="ml-[7px] min-w-0 flex-1 bg-transparent font-['DejaVu_Sans_Mono',monospace] text-xs italic text-[#666] outline-none placeholder:text-[#777]" />
      <Arrow className="mr-1 mt-3 h-1 w-[7px] rotate-180 text-black" />
    </form>
  );
}

/* ---------- status bar ---------- */

const icons = {
  grid: <path d="M5 1v14M9 1v14M13 1v14M1 4h15M1 8h15M1 12h15" stroke="#fff" strokeWidth="1.300" />,
  snap: <path d="M3 3h12M3 8h12M3 13h12" stroke="#ddd" strokeWidth="2" strokeDasharray="2 3" />,
  infer: <g stroke="#ddd"><path d="M4.500 1v8M.5 5h8" /><rect x="7" y="11" width="8" height="3" fill="#ddd" /></g>,
  ortho: <path d="M1.500 1v13.500H16M2 9h5v5" fill="none" stroke="#ddd" strokeWidth="1.400" />,
  polar: <g fill="none" stroke="#ddd" strokeWidth="1.400"><circle cx="7" cy="9" r="5.500" /><path d="M7 9h9M7 9l7-8" /></g>,
  iso: <g><path d="M2 1l12 13" stroke="#d96b6b" strokeWidth="1.400" /><path d="M8 1v14" stroke="#7ed08a" /><rect x="6.500" y="6.500" width="3" height="3" fill="#eee" /></g>,
  angle: <path d="M13 1 1.500 14H16" fill="none" stroke="#ddd" strokeWidth="1.500" />,
  osnap: <g fill="none" stroke="#ddd" strokeWidth="1.400"><path d="M6 3h9v11H3V7" /><rect x="1" y="1" width="4" height="4" stroke="#f0a070" /></g>,
  weight: <path d="M0 2h6M7 2h9M0 7h16M5 13h11M0 13h3" stroke="#fff" strokeWidth="3" />,
  transp: <g><rect x="1" y="1" width="14" height="14" fill="none" stroke="#fff" /><path d="M3 4h10M3 8h10M3 12h10" stroke="#fff" strokeWidth="2" strokeDasharray="2 2" /><path d="M5 6h8M5 10h8" stroke="#fff" strokeWidth="2" strokeDasharray="2 2" /></g>,
  cycle: <g><path d="M4.500 0v8M0 3.500h15V6" fill="none" stroke="#ddd" /><rect x="6" y="6" width="10" height="10" fill="#7fdca0" /></g>,
  cube: <g fill="none" stroke="#ddd" strokeWidth="1.200"><path d="M5 5h7v8H5zM5 5l3-4h8l-4 4M16 1v8l-4 4" /><rect x="1" y="11" width="4" height="4" fill="#4d4d4d" stroke="#f0a070" /></g>,
  ucs: <path d="M3.500 15V2M1 4l2.500-3L6 4M3.500 12H15M12 9.500l3 2.500-3 2.500M12 1 9 5h4l-3 4" fill="none" stroke="#ddd" strokeWidth="1.200" />,
  filter: <g fill="none" stroke="#ddd"><path d="M2 6h9v8H2zM2 6l4-4h9l-4 4M15 2v8l-4 4" strokeDasharray="2 1" /><path d="M1 5h3v3H1zM10 5h3v3h-3zM1 13h3v3H1zM10 13h3v3h-3z" fill="#55b2f2" stroke="none" /></g>,
  visible: <g fill="#fff"><path d="M7 1 9 7l5 7-5-2-2-2-2 2-5 3 5-8z" /><circle cx="13" cy="3.500" r="2.300" fill="none" stroke="#fff" /></g>,
  auto: <g fill="#fff"><path d="M7 1 9 7l5 7-5-2-2-2-2 2-5 3 5-8z" /><path d="m14 0-4 5h3l-2 4 5-5h-3z" /></g>,
  scale: <path d="m8 1 2 6 5 8-5-2-2-3-2 3-5 2 5-8z" fill="#d0d0d0" />,
  plus: <path d="M8 0v16M0 8h16" stroke="#d0d0d0" strokeWidth="2" />,
  props: <g fill="none" stroke="#fff" strokeWidth="1.200"><path d="M2 1h12v14H2z" /><path d="M4 4h2m1 0h5M4 8h2m1 0h5M4 12h2m1 0h5" strokeWidth="1.600" /></g>,
  isolate: <g><path d="m1 11 7-4 7 4-7 4z" fill="#ddd" /><path d="m1 7 7-4 7 4-7 4z" fill="#55b2f2" /><circle cx="8" cy="6" r="6" fill="none" stroke="#ccc" strokeDasharray="1 2" /></g>,
};

const status = [
  { id: "grid", name: "Grid", on: true },
  { id: "snap", name: "Snap mode", menu: true },
  { id: "infer", name: "Dynamic input", sep: true },
  { id: "ortho", name: "Ortho mode", sep: true },
  { id: "polar", name: "Polar tracking", menu: true },
  { id: "iso", name: "Isometric drafting", menu: true },
  { id: "angle", name: "Snap tracking", sep: true },
  { id: "osnap", name: "Object snap", menu: true },
  { id: "weight", name: "Lineweight", on: true, sep: true },
  { id: "transp", name: "Transparency", on: true },
  { id: "cycle", name: "Selection cycling", sep: true },
  { id: "cube", name: "3D object snap", menu: true },
  { id: "ucs", name: "Dynamic UCS", sep: true },
  { id: "filter", name: "Selection filter", menu: true },
  { id: "visible", name: "Annotation visibility", on: true, sep: true },
  { id: "auto", name: "Auto scale", on: true },
  { id: "scale", name: "Annotation scale" },
];

function StatusIcon({ id, name, on, sep, menu, children }) {
  return (
    <>
      <div className={`flex h-full items-center justify-center ${menu ? "w-6" : "w-[25px]"} ${sep ? "border-l border-[#7a7a7a]" : ""}`}>
        <button aria-label={name} className={`flex h-[22px] w-[22px] items-center justify-center ${on ? "bg-[#5b8fc7]" : ""}`}>
          {children || <svg viewBox="0 0 16 16" className="h-4 w-4">{icons[id]}</svg>}
        </button>
      </div>
      {menu && (
        <button aria-label={`${name} options`} className="flex w-4 justify-center">
          <Arrow className="h-[5px] w-[7px] text-white" />
        </button>
      )}
    </>
  );
}

function LayoutTab({ children, active, className }) {
  return (
    <button className={`h-[18px] rounded-b-[9px] text-xs leading-[17px] ${active ? "bg-[#7a7a7a] font-bold text-white" : "bg-[#5a5a5a] text-[#c4c4c4]"} ${className}`}>
      {children}
    </button>
  );
}

function StatusBar() {
  return (
    <footer className="flex h-6 shrink-0 overflow-hidden border-t border-[#5a5a5a] bg-[#393939]">
      <nav className="flex min-w-0 flex-1 items-start gap-[2px] overflow-hidden">
        <LayoutTab active className="-ml-6 px-2">Model</LayoutTab>
        <LayoutTab className="px-[10px]">Layout1</LayoutTab>
        <LayoutTab className="px-[10px]">Export to AutoCAD</LayoutTab>
        <LayoutTab className="px-2 font-bold">+</LayoutTab>
      </nav>
      <div className="flex w-[969px] shrink-0 items-center overflow-hidden border-l border-[#777] bg-[#4b4b4b] text-[13px] text-white">
        <span className="w-[212px] shrink-0 pr-[6px] text-right">926607.021, 1703149.360, 0.000</span>
        <button className="h-full w-[50px] shrink-0 border-x border-[#7a7a7a] text-xs">MODEL</button>
        {status.map((s) => <StatusIcon key={s.id} {...s} />)}
        <button className="flex w-[55px] items-center justify-center gap-1 text-xs">
          1:200 <Arrow className="h-[5px] w-[7px]" />
        </button>
        <StatusIcon name="Workspace" menu sep>
          <FaCog size={16} color="#d0d0d0" />
        </StatusIcon>
        <StatusIcon id="plus" name="Annotation monitor" sep />
        <div className="flex h-full w-[30px] items-center justify-center border-x border-[#7a7a7a]">
          <button aria-label="Quick properties" className="flex h-[22px] w-[22px] items-center justify-center bg-[#5b8fc7]">
            <svg viewBox="0 0 16 16" className="h-4 w-4">{icons.props}</svg>
          </button>
        </div>
        <StatusIcon id="isolate" name="Isolate objects" />
        <span className="ml-1 shrink-0 text-[11px]">3.5</span>
      </div>
    </footer>
  );
}

function Markup() {
  const net = [[572, 284], [585, 262], [620, 256], [660, 258], [700, 266], [722, 278], [720, 290], [695, 299], [665, 303], [635, 300], [600, 292], [578, 287]];
  const fill = [[948, 585], [962, 568], [985, 559], [1020, 559], [1055, 558], [1080, 566], [1079, 590], [1071, 610], [1045, 620], [1020, 619], [995, 610], [970, 603], [952, 592]];
  const range = [[1515, 157], [1522, 137], [1547, 131], [1587, 130], [1620, 137], [1637, 157], [1628, 180], [1610, 194], [1578, 185], [1551, 177], [1524, 169]];
  return (
    <svg viewBox="0 0 1752 864" className="pointer-events-none absolute left-0 top-0 h-[864px] w-[1752px]">
      <g fill="none" stroke="#fff200" strokeOpacity=".5" strokeWidth="14" strokeLinejoin="round">
        <path d={smooth(net)} />
        <path d={smooth(fill)} />
        <path d={smooth(range)} />
      </g>
    </svg>
  );
}

export default function App() {
  return (
    <div className="relative flex h-screen flex-col overflow-hidden bg-[#22282f] font-['Open_Sans','Noto_Sans',sans-serif]">
      <Toolbar />
      <Canvas />
      <StatusBar />
      <Panorama />
      <SurfaceDialog />
      <CommandLine />
      <Markup />
    </div>
  );
}
